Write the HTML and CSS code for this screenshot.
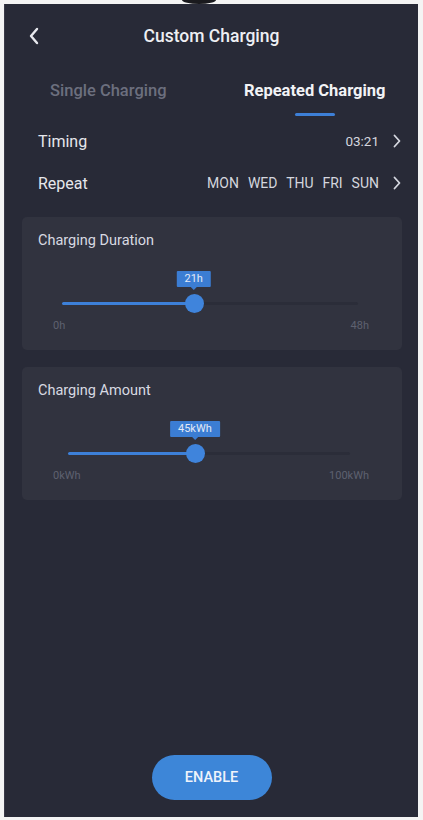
FILE: index.html
```html
<!DOCTYPE html>
<html lang="en">
    <head>
        <meta charset="UTF-8">
        <meta name="viewport" content="width=device-width, initial-scale=1.0">
        <title>Custom Charging</title>
        <link rel="stylesheet" href="styles.css">
    </head>
    <body>
        <div class="notch"></div>
        <div id="screen">
            <div class="header">
                <svg class="back" width="12" height="18" viewBox="0 0 12 18">
                    <path d="M9 2 L3 9 L9 16" fill="none" stroke="#e8e9ee" stroke-width="2.4" stroke-linecap="round" stroke-linejoin="round"/>
                </svg>
                <h1>Custom Charging</h1>
            </div>

            <div class="tabs">
                <div class="tab">Single Charging</div>
                <div class="tab active">Repeated Charging</div>
            </div>

            <div class="row">
                <span class="label">Timing</span>
                <span class="value">03:21</span>
                <svg class="arrow" width="8" height="14" viewBox="0 0 8 14">
                    <path d="M1.5 1.5 L6.5 7 L1.5 12.5" fill="none" stroke="#d6d8e0" stroke-width="1.8" stroke-linecap="round" stroke-linejoin="round"/>
                </svg>
            </div>
            <div class="row">
                <span class="label">Repeat</span>
                <span class="value days">MON&nbsp; WED&nbsp; THU&nbsp; FRI&nbsp; SUN</span>
                <svg class="arrow" width="8" height="14" viewBox="0 0 8 14">
                    <path d="M1.5 1.5 L6.5 7 L1.5 12.5" fill="none" stroke="#d6d8e0" stroke-width="1.8" stroke-linecap="round" stroke-linejoin="round"/>
                </svg>
            </div>

            <div class="card">
                <div class="card-title">Charging Duration</div>
                <div class="slider">
                    <div class="track"><div class="fill" style="width: 44.5%"></div></div>
                    <div class="tip" style="left: 44.5%">21h</div>
                    <div class="thumb" style="left: 44.5%"></div>
                </div>
                <div class="bounds">
                    <span>0h</span>
                    <span>48h</span>
                </div>
            </div>

            <div class="card">
                <div class="card-title">Charging Amount</div>
                <div class="slider amount">
                    <div class="track"><div class="fill" style="width: 45%"></div></div>
                    <div class="tip" style="left: 45%">45kWh</div>
                    <div class="thumb" style="left: 45%"></div>
                </div>
                <div class="bounds">
                    <span>0kWh</span>
                    <span>100kWh</span>
                </div>
            </div>

            <div class="spacer"></div>
            <button id="enable">ENABLE</button>
        </div>
    </body>
</html>
```

FILE: styles.css
```css
body {
    margin: 0;
    padding: 4px 5px 3px 4px;
    background-color: #f4f4f4;
    font-family: Roboto, "Noto Sans", Arial, sans-serif;
}

.notch {
    position: absolute;
    top: -4px;
    left: 182px;
    width: 34px;
    height: 8px;
    border-radius: 50%;
    background-color: #1a1a1e;
}

#screen {
    height: 813px;
    background-color: #282a37;
    display: flex;
    flex-direction: column;
    box-sizing: border-box;
    border-left: 1px solid #3a3a48;
}

/* entete */

.header {
    height: 64px;
    display: flex;
    align-items: center;
    padding-left: 23px;
}

.back {
    flex: none;
}

.header h1 {
    flex: 1;
    margin: 0 35px 0 0;
    text-align: center;
    font-size: 17.5px;
    font-weight: 500;
    color: #eeeff3;
}

.tabs {
    display: flex;
    height: 52px;
}

.tab {
    flex: 1;
    text-align: center;
    font-size: 16.5px;
    font-weight: 500;
    color: #6c6f7e;
    padding-top: 13px;
    position: relative;
}

.tab.active {
    color: #f2f3f6;
    font-weight: 700;
}

.tab.active::after {
    content: "";
    position: absolute;
    left: 50%;
    bottom: 4px;
    width: 40px;
    height: 3px;
    margin-left: -20px;
    border-radius: 2px;
    background-color: #3d7fd6;
}

/* lignes */

.row {
    display: flex;
    align-items: center;
    height: 42px;
    padding: 0 17px 0 33px;
}

.row .label {
    flex: 1;
    font-size: 16px;
    color: #e6e7ec;
}

.row .value {
    font-size: 13.5px;
    color: #d4d6de;
    margin-right: 14px;
}

.row .days {
    font-size: 14px;
    word-spacing: 1px;
}

/* cartes */

.card {
    margin: 13px 16px 0 17px;
    background-color: #31333f;
    border-radius: 5px;
    padding: 15px 16px 18px 16px;
}

.card + .card {
    margin-top: 17px;
}

.card-title {
    font-size: 14.5px;
    line-height: 18px;
    color: #d8dae2;
}

.slider {
    position: relative;
    height: 42px;
    margin: 21px 28px 0 24px;
}

.slider.amount {
    margin-left: 30px;
    margin-right: 36px;
}

.track {
    position: absolute;
    top: 31px;
    left: 0;
    right: 0;
    height: 3px;
    border-radius: 2px;
    background-color: #2b2d39;
}

.fill {
    height: 100%;
    border-radius: 2px;
    background-color: #3d80d8;
}

.thumb {
    position: absolute;
    top: 23px;
    width: 19px;
    height: 19px;
    margin-left: -9px;
    border-radius: 50%;
    background-color: #3f84dc;
}

.tip {
    position: absolute;
    top: 0;
    transform: translateX(-50%);
    padding: 0 8px;
    height: 16px;
    line-height: 16px;
    font-size: 11px;
    color: #e4eaf6;
    background-color: #3b7dd3;
    border-radius: 1px;
}

.tip::after {
    content: "";
    position: absolute;
    left: 50%;
    top: 16px;
    margin-left: -3px;
    border: 3px solid transparent;
    border-top-color: #3b7dd3;
}

.bounds {
    display: flex;
    justify-content: space-between;
    margin: 7px 17px 0 15px;
    font-size: 11px;
    line-height: 12px;
    color: #5e6170;
}

.spacer {
    flex: 1;
}

/* bouton */

#enable {
    align-self: center;
    width: 120px;
    height: 45px;
    margin: 0 0 17px 0;
    border: none;
    border-radius: 23px;
    background-color: #3d86d8;
    color: #eef3fb;
    font-family: Roboto, Arial, sans-serif;
    font-size: 14.5px;
    font-weight: 500;
}
```
